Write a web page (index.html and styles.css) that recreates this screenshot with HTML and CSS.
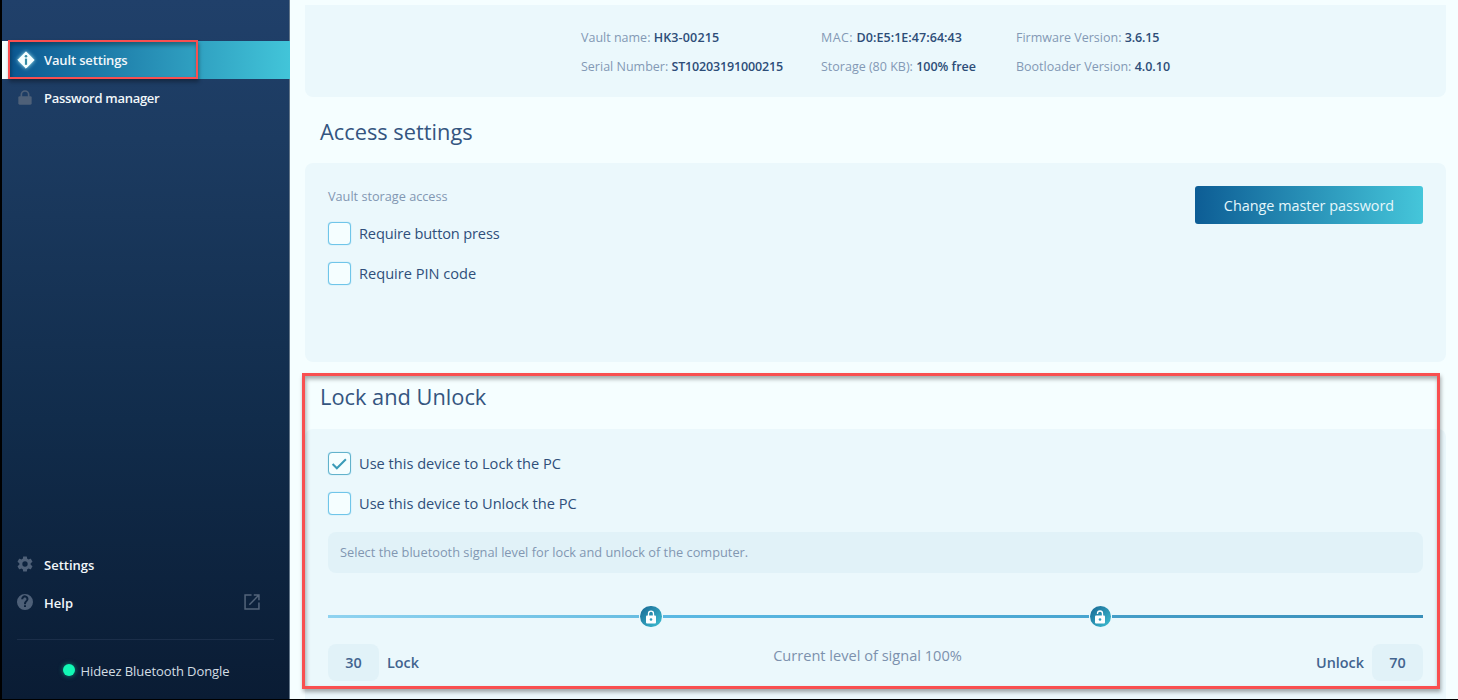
FILE: index.html
```
<!DOCTYPE html>
<html lang="en">
<head>
<meta charset="utf-8">
<title>Vault settings</title>
<link rel="stylesheet" href="styles.css">
</head>
<body>
<div class="app">
  <aside class="sidebar">
    <nav class="nav-top">
      <a class="nav-item active">
        <svg class="icon glow" viewBox="0 0 18 18"><path d="M9 .8 17.2 9 9 17.2.8 9z" fill="#f5ffff" stroke="#f5ffff" stroke-width="1" stroke-linejoin="round"/><circle cx="9" cy="5.2" r="1.300" fill="#348ca5"/><path d="M7.900 7.600h2.200v6.200H7.900z" fill="#348ca5"/></svg>
        <span class="t-vault">Vault settings</span>
      </a>
      <a class="nav-item">
        <svg class="icon dim" viewBox="0 0 18 18"><path d="M4.900 8V5.200a4.100 4.100 0 0 1 8.200 0V8" fill="none" stroke="currentColor" stroke-width="1.900"/><rect x="1.500" y="7" width="15" height="9.500" rx="1.500" fill="currentColor"/></svg>
        <span class="t-pass">Password manager</span>
      </a>
    </nav>
    <nav class="nav-bottom">
      <a class="nav-item">
        <svg class="icon dim raised" viewBox="1.500 1.500 21 21"><path fill="currentColor" d="M19.430 12.980c.04-.32.07-.64.07-.98s-.03-.66-.07-.98l2.110-1.650c.19-.15.24-.42.12-.64l-2-3.460c-.12-.22-.39-.3-.61-.22l-2.490 1c-.52-.4-1.080-.73-1.690-.98l-.38-2.650A.49.49 0 0 0 14 2h-4c-.25 0-.46.18-.49.42l-.38 2.650c-.61.25-1.170.59-1.690.98l-2.490-1c-.23-.09-.49 0-.61.22l-2 3.460c-.13.22-.07.49.12.64l2.110 1.650c-.04.32-.07.65-.07.98s.03.66.07.98l-2.110 1.650c-.19.15-.24.42-.12.64l2 3.460c.12.22.39.3.61.22l2.490-1c.52.4 1.080.73 1.690.98l.38 2.650c.03.24.24.42.49.42h4c.25 0 .46-.18.49-.42l.38-2.650c.61-.25 1.170-.59 1.690-.98l2.490 1c.23.09.49 0 .61-.22l2-3.460c.12-.22.07-.49-.12-.64zM12 15.500a3.500 3.500 0 1 1 0-7 3.500 3.500 0 0 1 0 7z"/></svg>
        <span>Settings</span>
      </a>
      <a class="nav-item">
        <svg class="icon dim raised" viewBox="1.500 1.500 21 21"><path fill="currentColor" d="M12 1.500a10.500 10.500 0 1 0 0 21 10.500 10.500 0 0 0 0-21zm1.300 17.200h-2.600v-2.500h2.600zm2.400-8.200-1 1.100c-.9.900-1.400 1.600-1.400 3.300h-2.600v-.7c0-1.200.5-2.300 1.300-3.100l1.300-1.300c.4-.4.6-.9.600-1.500 0-1.200-.9-2.100-2.100-2.100S9.700 7.100 9.700 8.300H7.100a4.700 4.700 0 1 1 8.600 2.200z"/></svg>
        <span>Help</span>
        <svg class="external raised" viewBox="0 0 18 18" fill="none" stroke="currentColor" stroke-width="1.700"><path d="M8.500 1.200H1.200v15.600h15.600V9.500M11 1.200h5.800V7M16.500 1.500 6 12"/></svg>
      </a>
    </nav>
    <div class="dongle"><i class="dot"></i><span>Hideez Bluetooth Dongle</span></div>
    <div class="marker marker-nav"></div>
  </aside>

  <main class="main">
    <section class="panel info">
      <div class="info-col name-col">
        <p>Vault name: <b class="name">HK3-00215</b></p>
        <p>Serial Number: <b class="serial">ST10203191000215</b></p>
      </div>
      <div class="info-col mac-col">
        <p><span class="mac">MAC: </span><b class="address">D0:E5:1E:47:64:43</b></p>
        <p>Storage (80 KB): <b>100% free</b></p>
      </div>
      <div class="info-col">
        <p>Firmware Version: <b class="firmware">3.6.15</b></p>
        <p>Bootloader Version: <b>4.0.10</b></p>
      </div>
    </section>

    <h2 class="heading access-heading">Access settings</h2>
    <section class="panel access">
      <div>
        <p class="caption">Vault storage access</p>
        <label class="check"><i class="box"></i><span class="t-press">Require button press</span></label>
        <label class="check"><i class="box"></i><span class="t-pin">Require PIN code</span></label>
      </div>
      <button class="primary">Change master password</button>
    </section>

    <h2 class="heading lock-heading">Lock and Unlock</h2>
    <section class="panel lock">
      <label class="check"><i class="box checked"><svg viewBox="0 0 16 16"><path d="M1.500 8.500 5.500 12.500 14 4" fill="none" stroke="#3a9bb8" stroke-width="1.900"/></svg></i><span>Use this device to Lock the PC</span></label>
      <label class="check"><i class="box"></i><span>Use this device to Unlock the PC</span></label>
      <p class="hint">Select the bluetooth signal level for lock and unlock of the computer.</p>
      <div class="slider">
        <i class="track low"></i>
        <span class="knob"><svg viewBox="0 0 12 14"><path d="M3.500 6V3.700a2.500 2.500 0 0 1 5 0V6" fill="none" stroke="#fff" stroke-width="1.300"/><rect x="1" y="5.500" width="10" height="8" rx="1" fill="#fff"/><circle cx="6" cy="9.500" r="1.300" fill="#2f9bbb"/></svg></span>
        <i class="track mid"></i>
        <span class="knob"><svg viewBox="0 0 12 14"><path d="M3.500 3.900v-.4a2.500 2.500 0 0 1 5 0V6" fill="none" stroke="#fff" stroke-width="1.300"/><rect x="1" y="5.500" width="10" height="8" rx="1" fill="#fff"/><circle cx="6" cy="9.500" r="1.300" fill="#2f9bbb"/></svg></span>
        <i class="track high"></i>
      </div>
      <div class="levels">
        <div class="level"><span class="value">30</span><span>Lock</span></div>
        <p class="current">Current level of signal 100%</p>
        <div class="level end"><span>Unlock</span><span class="value">70</span></div>
      </div>
    </section>
    <div class="marker marker-lock"></div>
  </main>
</div>
</body>
</html>
```
FILE: styles.css
```
* { box-sizing: border-box; }
body { margin: 0; background: #000; font-family: "Open Sans", "Noto Sans", sans-serif; color: #34557f; }
p, h2 { margin: 0; }
svg { display: block; }

.app { display: flex; width: 1458px; height: 700px; border-left: 2px solid #000; border-bottom: 1px solid #000; overflow: hidden; }

/* Sidebar */
.sidebar { position: relative; flex: 0 0 288px; display: flex; flex-direction: column; padding-top: 41px; border-right: 1px solid #637689; background: linear-gradient(#20406a, #1c3b61 20%, #112c4b 60%, #0a1c34); color: #f2f7fa; font-size: 13px; font-weight: 600; }
.nav-item { display: flex; align-items: center; height: 38px; padding: 0 29px 0 15px; }
.nav-item > span { margin-left: 11px; line-height: 18px; }
.nav-item.active { margin-right: -1px; border-left: 6px solid #f5ffff; padding-left: 10px; background: linear-gradient(90deg, #0b5791, #42c5d9); }
.nav-item.active > span { margin-left: 10px; }
.icon { flex: none; width: 16px; height: 16px; }
.glow { width: 18px; height: 18px; margin: 0 -1px; filter: drop-shadow(0 0 2px #9fe6ee); }
.dim { color: #4e6078; }
.raised { margin-bottom: 2px; }
.t-vault { letter-spacing: -.15px; }
.t-pass { letter-spacing: -.28px; }
.nav-bottom { margin-top: auto; }
.external { width: 16px; height: 16px; margin-left: auto; color: #53647a; }
.dongle { display: flex; align-items: center; justify-content: center; gap: 6px; height: 60px; margin: 17px 15px 0; border-top: 1px solid #1b2e49; padding: 2px 0 0 1px; color: #d3dde3; font-weight: 400; letter-spacing: -.09px; }
.dot { width: 12px; height: 12px; margin-top: -1px; border-radius: 50%; background: #12f9b5; box-shadow: 0 0 5px #12f9b580; }

/* Main column */
.main { position: relative; flex: 1; padding: 5px 12px 0 15px; background: #f5feff; }
.panel { background: #ebf8fc; border-radius: 8px; }
.info { display: flex; height: 92px; padding: 18px 0 0 276px; border-radius: 0 0 8px 8px; font-size: 12.500px; line-height: 29px; color: #8399b5; white-space: nowrap; }
.info b { font-weight: 600; color: #2d4d78; }
.name-col { width: 240px; }
.mac-col { width: 195px; }
.info .name { letter-spacing: .15px; }
.serial { letter-spacing: -.15px; }
.mac { letter-spacing: .4px; }
.address { letter-spacing: .05px; }
.firmware { letter-spacing: -.15px; }
.heading { padding-left: 15px; font-size: 21.800px; line-height: 30px; font-weight: 400; }
.access-heading { margin: 20px 0 16px; }
.access { display: flex; justify-content: space-between; height: 199px; padding: 23px 23px 0; }
.caption { height: 20px; font-size: 12.700px; line-height: 20px; color: #8297b2; }
.check { display: flex; align-items: center; height: 40px; font-size: 14.600px; color: #2f4f7a; }
.caption + .check { margin-top: 7px; }
.box { width: 23px; height: 23px; margin-right: 8px; border: 1px solid #6fc5e9; border-radius: 4px; background: #f5feff; box-shadow: 0 0 1px #6fc5e9; }
.box.checked { border-color: #62b2cb; padding: 2px; }
.box svg { width: 17px; height: 17px; }
.t-press { letter-spacing: -.15px; }
.primary { width: 228px; height: 38px; padding: 1px 0 0; border: 0; border-radius: 3px; background: linear-gradient(90deg, #0d5d95, #45c6da); color: #e5f7fb; font: 14.400px "Open Sans", sans-serif; }
.lock-heading { margin: 20px 0 17px; }
.lock { height: 280px; padding: 14px 23px 0; border-radius: 8px 8px 0 0; }
.hint { height: 41px; margin-top: 9px; padding-left: 12px; border-radius: 8px; background: #e1f2f8; font-size: 12.800px; line-height: 41px; color: #8297b2; }
.slider { display: flex; align-items: center; gap: 1px; height: 21px; margin-top: 33px; }
.track { height: 3px; }
.low { flex: 0 0 311px; background: linear-gradient(90deg, #8fd3f0, #69bee2); }
.mid { flex: 0 0 426px; background: linear-gradient(90deg, #5bb9e3, #48a5d0); }
.high { flex: 1; background: linear-gradient(90deg, #459ec8, #398fb9); }
.knob { display: grid; place-items: center; flex: 0 0 21.500px; height: 21.500px; border-radius: 50%; background: linear-gradient(135deg, #176693, #3fc1d3); }
.knob svg { width: 12px; height: 14px; }
.levels { display: grid; grid-template-columns: 1fr auto 1fr; margin-top: 17px; font-size: 14.400px; }
.level { display: flex; align-items: center; gap: 8px; height: 37px; font-weight: 600; color: #42648f; }
.end { justify-content: flex-end; }
.value { width: 51px; border-radius: 8px; background: #e1f2f8; line-height: 37px; text-align: center; }
.current { margin-left: -16px; font-size: 14.600px; line-height: 22px; color: #7c91ad; }

/* Highlight frames laid over the interface */
.marker { position: absolute; border: 3px solid #f94f50; box-shadow: 1px 3px 4px #0005, inset 1px 3px 4px #0005; }
.marker-nav { left: 6px; top: 40px; width: 190px; height: 39px; border-width: 2px; }
.marker-lock { left: 12px; top: 373px; width: 1138px; height: 316px; }
```
